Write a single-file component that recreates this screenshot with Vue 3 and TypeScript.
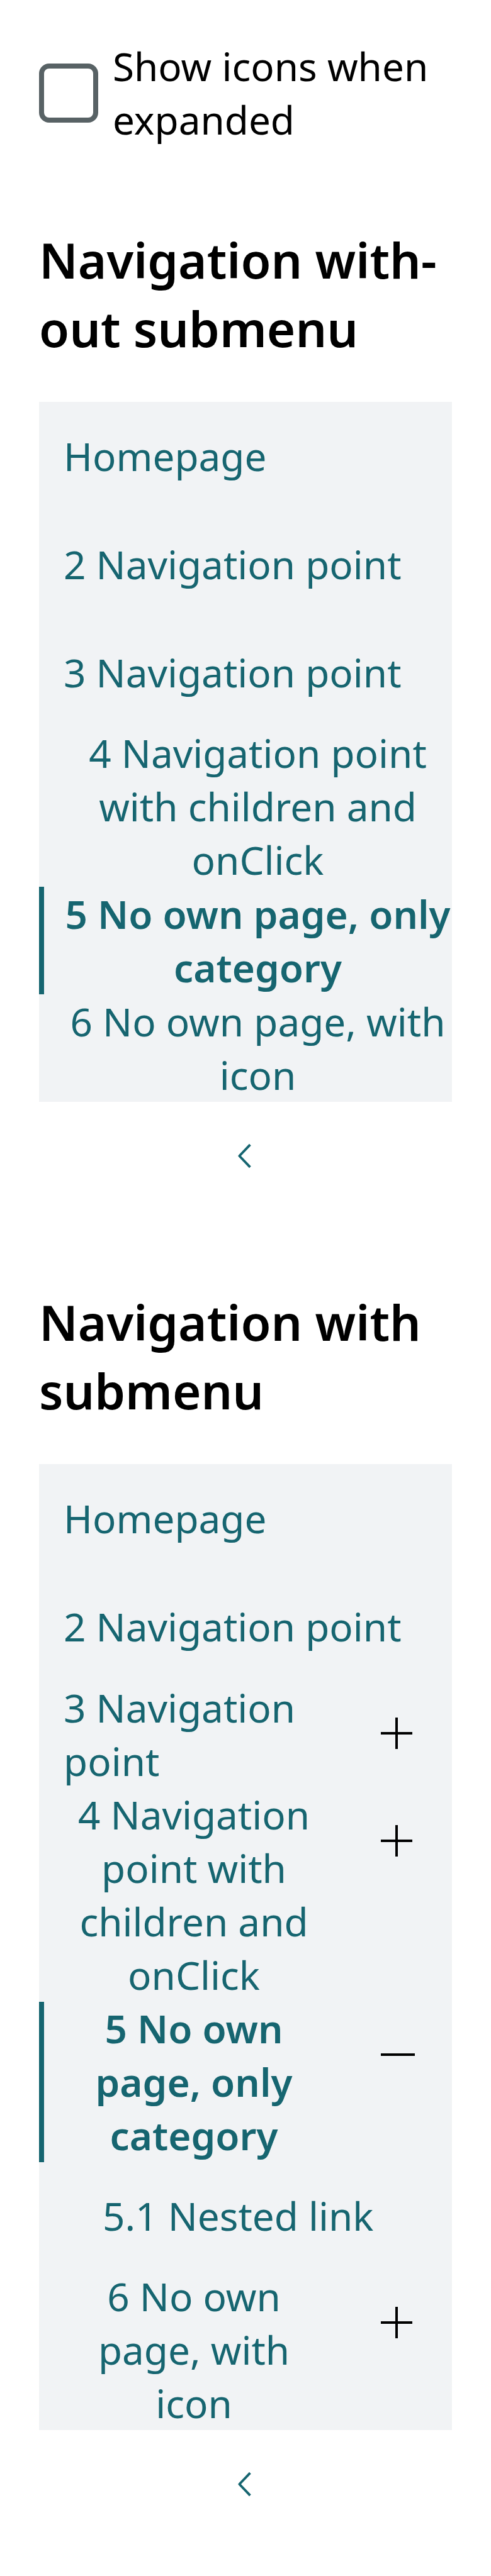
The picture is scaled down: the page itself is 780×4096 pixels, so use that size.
<script setup lang="ts">
import { ref } from 'vue'

interface NavItem {
  id: string
  label: string
  href?: string
  active?: boolean
  children?: { label: string; href: string }[]
}

interface NavSection {
  id: string
  title: string
  items: NavItem[]
}

const showIcons = ref(false)
const expanded = ref<Record<string, boolean>>({ 'sub-5': true })

const sections: NavSection[] = [
  {
    id: 'flat',
    title: 'Navigation with\u00ADout submenu',
    items: [
      { id: 'flat-1', label: 'Homepage', href: '#home' },
      { id: 'flat-2', label: '2 Navigation point', href: '#two' },
      { id: 'flat-3', label: '3 Navigation point', href: '#three' },
      { id: 'flat-4', label: '4 Navigation point with children and onClick' },
      { id: 'flat-5', label: '5 No own page, only category', active: true },
      { id: 'flat-6', label: '6 No own page, with icon' },
    ],
  },
  {
    id: 'sub',
    title: 'Navigation with submenu',
    items: [
      { id: 'sub-1', label: 'Homepage', href: '#home' },
      { id: 'sub-2', label: '2 Navigation point', href: '#two' },
      { id: 'sub-3', label: '3 Navigation point', href: '#three', children: [] },
      { id: 'sub-4', label: '4 Navigation point with children and onClick', children: [] },
      {
        id: 'sub-5',
        label: '5 No own page, only category',
        active: true,
        children: [{ label: '5.1 Nested link', href: '#nested' }],
      },
      { id: 'sub-6', label: '6 No own page, with icon', children: [] },
    ],
  },
]

function toggle(id: string): void {
  expanded.value[id] = !expanded.value[id]
}
</script>

<template>
  <main class="page">
    <label class="option" for="show-icons">
      <input id="show-icons" v-model="showIcons" class="box" type="checkbox" />
      <span>Show icons when expanded</span>
    </label>

    <section v-for="section in sections" :key="section.id" class="section">
      <h2 class="title">{{ section.title }}</h2>
      <nav :aria-labelledby="section.id">
        <ul class="list">
          <li v-for="item in section.items" :key="item.id">
            <div class="row" :class="{ active: item.active, split: item.children }">
              <a v-if="item.href" class="entry link" :href="item.href">{{ item.label }}</a>
              <button v-else class="entry action" type="button">{{ item.label }}</button>
              <button
                v-if="item.children"
                class="toggle"
                type="button"
                :aria-label="'Toggle ' + item.label"
                :aria-expanded="!!expanded[item.id]"
                @click="toggle(item.id)"
              >
                <svg class="icon" viewBox="0 0 16 16" aria-hidden="true">
                  <path v-if="expanded[item.id]" d="M1 7.5H15" />
                  <path v-else d="M1 7.5H14M7.5 1V14" />
                </svg>
              </button>
            </div>
            <ul v-if="item.children?.length && expanded[item.id]" class="nested">
              <li v-for="child in item.children" :key="child.label" class="row split">
                <a class="entry link" :href="child.href">{{ child.label }}</a>
              </li>
            </ul>
          </li>
        </ul>
      </nav>
      <button class="collapse" type="button" aria-label="Collapse navigation">
        <svg class="icon chevron" viewBox="0 0 16 16" aria-hidden="true">
          <path d="M9.9 3.4L5.5 8L9.9 12.6" />
        </svg>
      </button>
    </section>
  </main>
</template>

<style>
body {
  background: #ffffff;
}
</style>

<style scoped>
.page {
  display: flex;
  flex-direction: column;
  gap: 125px;
  box-sizing: border-box;
  padding: 62px 62px 61px;
  color: #000000;
  font-family: 'Noto Sans', sans-serif;
  font-size: 62px;
  line-height: 85px;
}

.option {
  display: flex;
  align-items: center;
  gap: 23px;
  min-height: 172px;
}

.box {
  flex: none;
  appearance: none;
  box-sizing: border-box;
  width: 94px;
  height: 94px;
  margin: 0;
  border: 8px solid #586265;
  border-radius: 16px;
  background: #ffffff;
}

.box:checked {
  background: #166570;
}

.title {
  margin: 0 0 62px;
  font-size: 78px;
  font-weight: 600;
  line-height: 109px;
}

.list,
.nested {
  margin: 0;
  padding: 0;
  list-style: none;
}

.list {
  background: #f1f3f5;
}

.nested {
  padding-left: 62px;
}

.row {
  display: flex;
  align-items: flex-start;
  border-left: 8px solid transparent;
}

.row.active {
  border-left-color: #166570;
  font-weight: 600;
}

.nested .row {
  border-left-width: 8px;
}

.entry {
  flex: 1;
  display: flex;
  align-items: center;
  box-sizing: border-box;
  min-width: 0;
  min-height: 171px;
  padding: 0 0 0 31px;
  color: #166570;
  font-family: inherit;
  font-size: inherit;
  font-weight: inherit;
  line-height: inherit;
}

.link {
  min-height: 172px;
  text-decoration: none;
}

.action {
  justify-content: center;
  border: 0;
  background: none;
  text-align: center;
}

.split .entry {
  min-height: 171px;
  padding-right: 31px;
}

.toggle,
.collapse {
  display: flex;
  align-items: center;
  justify-content: center;
  height: 171px;
  padding: 0;
  border: 0;
  background: none;
}

.toggle {
  flex: none;
  width: 172px;
  color: #000000;
}

.collapse {
  width: 100%;
  color: #166570;
}

.icon {
  width: 62px;
  height: 62px;
  fill: none;
  stroke: currentColor;
  stroke-width: 1;
  shape-rendering: crispEdges;
}

.chevron {
  stroke-linejoin: round;
  shape-rendering: auto;
}
</style>
